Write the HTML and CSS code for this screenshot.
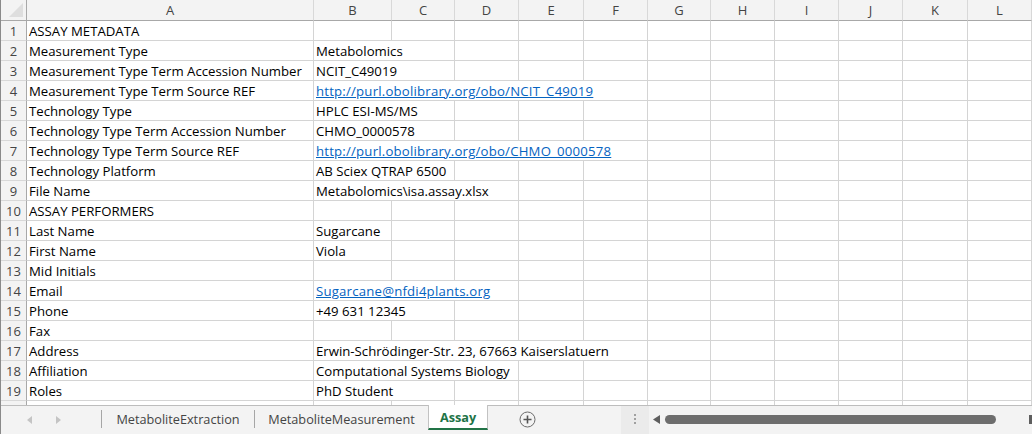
FILE: index.html
```html
<!DOCTYPE html>
<html lang="en">
<head>
<meta charset="utf-8">
<title>Assay</title>
<link rel="stylesheet" href="styles.css">
</head>
<body>
<div class="window">
  <div class="grid">
    <div class="corner"><span class="tri"></span></div>
    <div class="ch">A</div><div class="ch">B</div><div class="ch">C</div><div class="ch">D</div><div class="ch">E</div><div class="ch">F</div><div class="ch">G</div><div class="ch">H</div><div class="ch">I</div><div class="ch">J</div><div class="ch">K</div><div class="ch">L</div>

    <div class="rh">1</div><div class="c">ASSAY METADATA</div><div class="c"></div><div class="c"></div><div class="c"></div><div class="c"></div><div class="c"></div><div class="c"></div><div class="c"></div><div class="c"></div><div class="c"></div><div class="c"></div><div class="c"></div>

    <div class="rh">2</div><div class="c">Measurement Type</div><div class="c s2">Metabolomics</div><div class="c"></div><div class="c"></div><div class="c"></div><div class="c"></div><div class="c"></div><div class="c"></div><div class="c"></div><div class="c"></div><div class="c"></div>

    <div class="rh">3</div><div class="c">Measurement Type Term Accession Number</div><div class="c s2">NCIT_C49019</div><div class="c"></div><div class="c"></div><div class="c"></div><div class="c"></div><div class="c"></div><div class="c"></div><div class="c"></div><div class="c"></div><div class="c"></div>

    <div class="rh">4</div><div class="c">Measurement Type Term Source REF</div><div class="c s5"><a class="link" href="#">http://purl.obolibrary.org/obo/NCIT_C49019</a></div><div class="c"></div><div class="c"></div><div class="c"></div><div class="c"></div><div class="c"></div><div class="c"></div>

    <div class="rh">5</div><div class="c">Technology Type</div><div class="c s2">HPLC ESI-MS/MS</div><div class="c"></div><div class="c"></div><div class="c"></div><div class="c"></div><div class="c"></div><div class="c"></div><div class="c"></div><div class="c"></div><div class="c"></div>

    <div class="rh">6</div><div class="c">Technology Type Term Accession Number</div><div class="c s2">CHMO_0000578</div><div class="c"></div><div class="c"></div><div class="c"></div><div class="c"></div><div class="c"></div><div class="c"></div><div class="c"></div><div class="c"></div><div class="c"></div>

    <div class="rh">7</div><div class="c">Technology Type Term Source REF</div><div class="c s5"><a class="link" href="#">http://purl.obolibrary.org/obo/CHMO_0000578</a></div><div class="c"></div><div class="c"></div><div class="c"></div><div class="c"></div><div class="c"></div><div class="c"></div>

    <div class="rh">8</div><div class="c">Technology Platform</div><div class="c s2">AB Sciex QTRAP 6500</div><div class="c"></div><div class="c"></div><div class="c"></div><div class="c"></div><div class="c"></div><div class="c"></div><div class="c"></div><div class="c"></div><div class="c"></div>

    <div class="rh">9</div><div class="c">File Name</div><div class="c s3">Metabolomics\isa.assay.xlsx</div><div class="c"></div><div class="c"></div><div class="c"></div><div class="c"></div><div class="c"></div><div class="c"></div><div class="c"></div><div class="c"></div>

    <div class="rh">10</div><div class="c">ASSAY PERFORMERS</div><div class="c"></div><div class="c"></div><div class="c"></div><div class="c"></div><div class="c"></div><div class="c"></div><div class="c"></div><div class="c"></div><div class="c"></div><div class="c"></div><div class="c"></div>

    <div class="rh">11</div><div class="c">Last Name</div><div class="c">Sugarcane</div><div class="c"></div><div class="c"></div><div class="c"></div><div class="c"></div><div class="c"></div><div class="c"></div><div class="c"></div><div class="c"></div><div class="c"></div><div class="c"></div>

    <div class="rh">12</div><div class="c">First Name</div><div class="c">Viola</div><div class="c"></div><div class="c"></div><div class="c"></div><div class="c"></div><div class="c"></div><div class="c"></div><div class="c"></div><div class="c"></div><div class="c"></div><div class="c"></div>

    <div class="rh">13</div><div class="c">Mid Initials</div><div class="c"></div><div class="c"></div><div class="c"></div><div class="c"></div><div class="c"></div><div class="c"></div><div class="c"></div><div class="c"></div><div class="c"></div><div class="c"></div><div class="c"></div>

    <div class="rh">14</div><div class="c">Email</div><div class="c s3"><a class="link" href="#">Sugarcane@nfdi4plants.org</a></div><div class="c"></div><div class="c"></div><div class="c"></div><div class="c"></div><div class="c"></div><div class="c"></div><div class="c"></div><div class="c"></div>

    <div class="rh">15</div><div class="c">Phone</div><div class="c s2">+49 631 12345</div><div class="c"></div><div class="c"></div><div class="c"></div><div class="c"></div><div class="c"></div><div class="c"></div><div class="c"></div><div class="c"></div><div class="c"></div>

    <div class="rh">16</div><div class="c">Fax</div><div class="c"></div><div class="c"></div><div class="c"></div><div class="c"></div><div class="c"></div><div class="c"></div><div class="c"></div><div class="c"></div><div class="c"></div><div class="c"></div><div class="c"></div>

    <div class="rh">17</div><div class="c">Address</div><div class="c s5">Erwin-Schrödinger-Str. 23, 67663 Kaiserslatuern</div><div class="c"></div><div class="c"></div><div class="c"></div><div class="c"></div><div class="c"></div><div class="c"></div>

    <div class="rh">18</div><div class="c">Affiliation</div><div class="c s3">Computational Systems Biology</div><div class="c"></div><div class="c"></div><div class="c"></div><div class="c"></div><div class="c"></div><div class="c"></div><div class="c"></div><div class="c"></div>

    <div class="rh">19</div><div class="c">Roles</div><div class="c s2">PhD Student</div><div class="c"></div><div class="c"></div><div class="c"></div><div class="c"></div><div class="c"></div><div class="c"></div><div class="c"></div><div class="c"></div><div class="c"></div>

    <div class="rh part"></div><div class="c part"></div><div class="c part"></div><div class="c part"></div><div class="c part"></div><div class="c part"></div><div class="c part"></div><div class="c part"></div><div class="c part"></div><div class="c part"></div><div class="c part"></div><div class="c part"></div><div class="c part"></div>
  </div>

  <div class="tabbar">
    <div class="navs">
      <svg class="nav" width="6" height="8" viewBox="0 0 6 8"><path d="M5 0 L0 4 L5 8 Z" fill="#c4c4c4"/></svg>
      <svg class="nav" width="6" height="8" viewBox="0 0 6 8"><path d="M1 0 L6 4 L1 8 Z" fill="#c4c4c4"/></svg>
    </div>
    <div class="sep"></div>
    <div class="tab tab1">MetaboliteExtraction</div>
    <div class="sep"></div>
    <div class="tab tab2">MetaboliteMeasurement</div>
    <div class="tab active">Assay</div>
    <div class="addarea">
      <svg width="17" height="17" viewBox="0 0 17 17"><circle cx="8.5" cy="8.5" r="7.5" fill="none" stroke="#6a6a6a" stroke-width="1"/><path d="M8.5 4.5 V12.5 M4.5 8.5 H12.5" stroke="#555" stroke-width="1.6"/></svg>
    </div>
    <div class="grip"><span></span><span></span><span></span></div>
    <div class="hscroll">
      <svg class="sarrow" width="7" height="9" viewBox="0 0 7 9"><path d="M7 0 L0 4.5 L7 9 Z" fill="#5e5e5e"/></svg>
      <div class="thumb"></div>
      <div class="rarrow"></div>
    </div>
  </div>
</div>
</body>
</html>
```

FILE: styles.css
```css
* { box-sizing: border-box; }
html, body { margin: 0; padding: 0; }
body {
  width: 1032px;
  height: 434px;
  overflow: hidden;
  background: #ffffff;
  font-family: "Open Sans", "Liberation Sans", sans-serif;
  font-size: 13px;
  color: #000;
}
.window {
  width: 1032px;
  height: 434px;
  border-left: 1px solid #8a8a8a;
  display: flex;
  flex-direction: column;
}
.grid {
  display: grid;
  grid-template-columns: 26px 287px 78px 63px 64px 65px 64px 63px 64px 64px 64px 65px 64px;
  grid-template-rows: 21px repeat(19, 20px) 4px;
}
.corner {
  background: #f3f3f3;
  border-right: 1px solid #a8a8a8;
  border-bottom: 1px solid #a8a8a8;
  position: relative;
}
.corner .tri {
  position: absolute;
  right: 3px;
  bottom: 3px;
  width: 0;
  height: 0;
  border-left: 14px solid transparent;
  border-bottom: 14px solid #dedede;
}
.ch {
  background: #f3f3f3;
  border-right: 1px solid #d8d8d8;
  border-bottom: 1px solid #a8a8a8;
  color: #444;
  text-align: center;
  line-height: 20px;
  font-size: 13px;
}
.rh {
  background: #f3f3f3;
  border-right: 1px solid #a8a8a8;
  border-bottom: 1px solid #d8d8d8;
  color: #444;
  text-align: center;
  line-height: 20px;
  font-size: 13px;
}
.c {
  border-right: 1px solid #d4d4d4;
  border-bottom: 1px solid #d4d4d4;
  padding: 0 0 0 2px;
  line-height: 20px;
  font-size: 13.2px;
  white-space: nowrap;
  overflow: hidden;
}
.s2 { grid-column: span 2; }
.s3 { grid-column: span 3; }
.s5 { grid-column: span 5; }
.part { border-bottom: none; }
.link {
  color: #0563c1;
  text-decoration: underline;
  letter-spacing: 0.2px;
}

.tabbar {
  height: 29px;
  border-top: 1px solid #bdbdbd;
  background: #f3f3f3;
  display: flex;
  align-items: stretch;
  color: #444;
  font-size: 12.7px;
}
.navs {
  width: 100px;
  display: flex;
  align-items: center;
  gap: 22px;
  padding-left: 26px;
}
.sep {
  width: 1px;
  background: #a6a6a6;
  margin: 4px 0 6px;
}
.tab {
  display: flex;
  align-items: center;
  justify-content: center;
  padding-bottom: 2px;
}
.tab1 { width: 152px; }
.tab2 { width: 173px; }
.active {
  width: 60px;
  background: #ffffff;
  border-left: 1px solid #c2c2c2;
  border-right: 1px solid #c2c2c2;
  border-bottom: 2px solid #217346;
  margin-bottom: 4px;
  margin-top: -1px;
  color: #217346;
  font-weight: 700;
  padding-bottom: 0;
}
.addarea {
  width: 133px;
  display: flex;
  align-items: center;
  padding-left: 31px;
  padding-bottom: 2px;
}
.grip {
  width: 28px;
  background: #ebebeb;
  display: flex;
  flex-direction: column;
  align-items: center;
  justify-content: center;
  gap: 2px;
  padding-bottom: 2px;
}
.grip span {
  width: 2px;
  height: 2px;
  background: #a0a0a0;
}
.hscroll {
  flex: 1;
  display: flex;
  align-items: center;
  padding-left: 4px;
  padding-bottom: 2px;
}
.sarrow { margin-right: 5px; }
.thumb {
  width: 331px;
  height: 9px;
  border-radius: 5px;
  background: #6d6d6d;
}
.rarrow {
  margin-left: auto;
  width: 3px;
  height: 9px;
  background: #5e5e5e;
}
```
